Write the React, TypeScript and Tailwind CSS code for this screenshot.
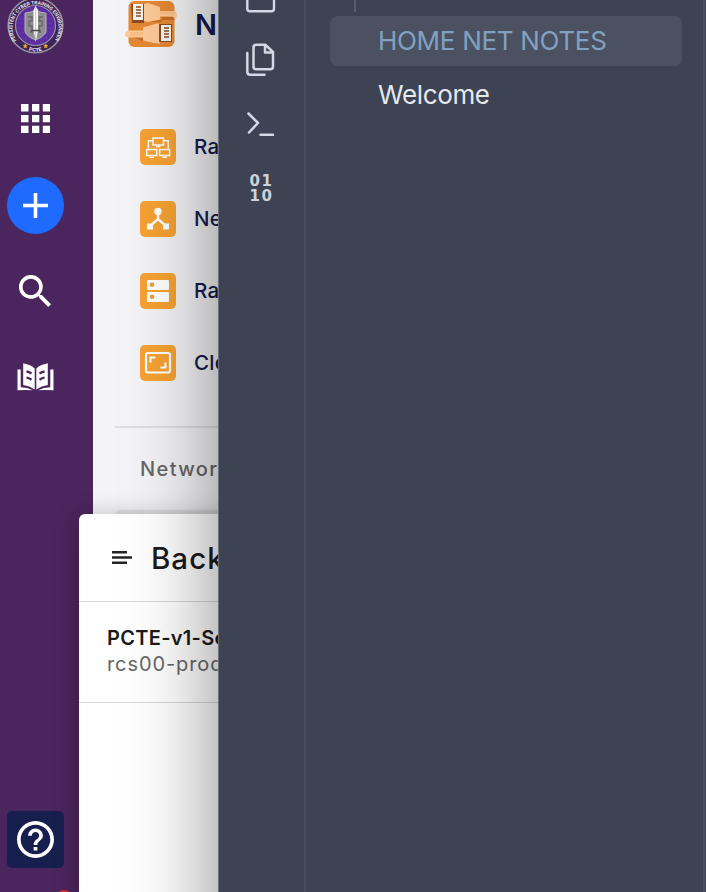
import React from "react";

function Seal() {
  return (
    <svg viewBox="0 0 57 57" className="size-[57px]" fontFamily="Liberation Sans, sans-serif">
      <defs>
        <path id="seal-top" d="M 9.5 43.5 A 23 23 0 1 1 47.5 43.5" />
        <path id="seal-bottom" d="M 16 51.2 A 25.8 25.8 0 0 0 41 51.2" />
      </defs>
      <circle cx="28.5" cy="28.5" r="27.3" fill="#402458" stroke="#9a95a3" strokeWidth="1.6" />
      <circle cx="28.5" cy="28.5" r="20" fill="#5b2da0" stroke="#9a95a3" strokeWidth="1.2" />
      <path d="M12 22h33M11 26h35M10 31h37M12 36h33M15 41h27M19 15v28M24 11v35M34 11v35M39 15v28" stroke="#7a50ba" strokeWidth=".5" strokeDasharray="2 1" />
      <path d="M18 16.200q6-.8 10.500-3 4.500 2.200 10.500 3v18.500q-2 5-10.500 8.300-8.500-3.300-10.500-8.300z" fill="#8e8e91" stroke="#b3b2b7" />
      <path d="M21 20h4v4h-3v5h3v6h-2M36 20h-4v4h3v5h-3v6h2" fill="none" stroke="#65656a" strokeWidth="1.300" />
      <path d="M28.500 9l2.600 4v20l-2.300 12-2.300-12V13z" fill="#fafafa" />
      <path d="M28.700 11v32" stroke="#aaa" strokeWidth=".7" />
      <path d="M24 33.500h9.500" stroke="#47474c" strokeWidth="1.500" />
      <text fill="#f0edf3" fontSize="5.200" fontWeight="700">
        <textPath href="#seal-top" textLength="101" lengthAdjust="spacingAndGlyphs">PERSISTENT CYBER TRAINING ENVIRONMENT</textPath>
      </text>
      <text fill="#f0edf3" fontSize="5" fontWeight="700">
        <textPath href="#seal-bottom" startOffset="50%" textAnchor="middle">PCTE</textPath>
      </text>
      <path d="M18.200 47l.7 1.300 1.400.2-1.100 1 .3 1.500-1.300-.7-1.300.7.3-1.500-1.100-1 1.400-.2zM38.800 47l.7 1.300 1.400.2-1.100 1 .3 1.500-1.300-.7-1.300.7.3-1.500-1.100-1 1.400-.2z" fill="#eab52c" stroke="#eab52c" strokeWidth=".4" />
    </svg>
  );
}

function Sidebar() {
  return (
    <nav className="relative flex h-full w-[93px] shrink-0 flex-col bg-[#4b255d] pl-[7px]">
      <div className="-mt-[3.500px] h-[57px]"><Seal /></div>
      <svg viewBox="0 0 29 29" className="mt-[50.500px] ml-[14px] size-[29px] fill-white">
        <path d="M0 0h7.500v7.500H0zM11 0h7.300v7.500H11zM21.800 0H29v7.500h-7.200zM0 11h7.500v7.300H0zM11 11h7.300v7.300H11zM21.800 11H29v7.300h-7.200zM0 21.800h7.500V29H0zM11 21.800h7.300V29H11zM21.800 21.800H29V29h-7.200z" />
      </svg>
      <div className="mt-[44px] flex size-[57px] items-center justify-center rounded-full bg-[#1f6bff]">
        <svg viewBox="0 0 25 25" className="size-[25px]"><path d="M12.500 0v25M0 12.500h25" stroke="white" strokeWidth="3.600" /></svg>
      </div>
      <svg viewBox="3 3 17.500 17.500" className="mt-[41px] ml-[12px] size-[32px] fill-white">
        <path d="M15.500 14h-.79l-.28-.27A6.471 6.471 0 0 0 16 9.500 6.500 6.500 0 1 0 9.500 16c1.610 0 3.090-.59 4.230-1.570l.27.28v.79l5 4.990L20.490 19l-4.990-5zm-6 0C7.010 14 5 11.990 5 9.500S7.010 5 9.500 5 14 7.010 14 9.500 11.990 14 9.500 14z" />
      </svg>
      <svg viewBox="0 0 37 28" className="mt-[56px] ml-[10px] h-[28px] w-[37px]">
        <g fill="white">
          <path d="M6.200.3Q14 1.800 17.700 5.500V26.500Q12.500 22.800 6.200 22zM30.800.3Q23 1.800 19.300 5.500V26.500Q24.500 22.800 30.800 22z" />
          <path d="M.5 6.500h3.200v17.700q7 .2 12 3Q7 27 .5 27.300zM36.500 6.500h-3.200v17.700q-7 .2-12 3Q30 27 36.500 27.300z" />
        </g>
        <path d="M9.500 8.500q2.500.3 5 2M9.500 14.700q2.500.3 5 2M27.500 8.500q-2.500.3-5 2M27.500 14.700q-2.500.3-5 2" fill="none" stroke="#4b255d" strokeWidth="2.300" />
      </svg>
      <div className="mt-[420px] flex size-[57px] shrink-0 items-center justify-center rounded-[5px] bg-[#171f4e]">
        <svg viewBox="2 2 20 20" className="size-[37px] fill-white">
          <path d="M11 18h2v-2h-2v2zm1-16C6.480 2 2 6.480 2 12s4.480 10 10 10 10-4.480 10-10S17.520 2 12 2zm0 18c-4.410 0-8-3.590-8-8s3.590-8 8-8 8 3.590 8 8-3.590 8-8 8zm0-14c-2.210 0-4 1.790-4 4h2c0-1.100.9-2 2-2s2 .9 2 2c0 2-3 1.750-3 5h2c0-2.250 3-2.500 3-5 0-2.210-1.790-4-4-4z" />
        </svg>
      </div>
      <span className="absolute top-[890px] left-[55px] size-[18px] rounded-full bg-[#d92a25]" />
    </nav>
  );
}

function CableLogo() {
  return (
    <svg viewBox="0 0 54 48" className="h-[48px] w-[54px] shrink-0">
      <rect x="3.500" y="1" width="46" height="46" rx="6" fill="#e68935" />
      <path d="M20 22h17v-5h12.500v3H36zM5 36h12l15 8v-3H18z" fill="#c46e29" />
      <path d="M19 4l4-1 12 4v4h14q3 .5 3 4t-3 3.500l-1-2H35v3L23 22l-4-1zM35 24l-3-.5-14 4v3H4q-4 1-4 4t4 3h14v3l13 3h4z" fill="#ffcb9a" />
      <path d="M35 11h14v4H35zM5 32h13v4H5z" fill="#fbc088" />
      <path d="M6 4h13v19H7zM34 24h13v18H34z" fill="#8c4c22" />
      <path d="M8 4h10v16H8zM36 25h10v16H36z" fill="#f7f5ef" />
      <path d="M11 7h5M11 10h5M11 13h5M11 16h5M39 28h5M39 31h5M39 34h5M39 37h5" stroke="#8c4c22" strokeWidth="1.500" />
    </svg>
  );
}

const tiles: { label: string; icon: React.ReactNode }[] = [
  {
    label: "Range Networks",
    icon: (
      <g fill="none" stroke="white" strokeWidth="1.500">
        <path d="M13 9h10.500v7H13zM6.700 20.500h10v6h-10zM19.600 20.500h10v6h-10zM13 11.700H8.400v7.500M23.500 11.700h4.700v7.500" />
        <path d="M16 17.500h4.500M9.500 28.200h4.500M22.500 28.200h4.500" strokeWidth="1.500" />
      </g>
    ),
  },
  {
    label: "Network Maps",
    icon: (
      <g fill="white">
        <circle cx="18" cy="10.500" r="3.700" />
        <path d="M7 22.500h6v6H7zM23 22.500h6v6h-6z" />
        <path d="M18 12v7M10 25l8-7 8 7" fill="none" stroke="white" strokeWidth="2.400" />
      </g>
    ),
  },
  {
    label: "Range Hosts",
    icon: (
      <g>
        <rect x="7" y="7" width="22" height="10" rx="1" fill="white" />
        <rect x="7" y="19" width="22" height="10" rx="1" fill="white" />
        <circle cx="12" cy="11.700" r="2.300" fill="#f29d31" />
        <circle cx="12" cy="23.700" r="2.300" fill="#f29d31" />
      </g>
    ),
  },
  {
    label: "Cloud Consoles",
    icon: (
      <g fill="none" stroke="white">
        <rect x="6" y="8" width="24" height="19.500" rx="2" strokeWidth="2.200" />
        <path d="M10.500 17.500v-5h5M25.500 17.500v5h-5" strokeWidth="2.200" />
      </g>
    ),
  },
];

function Content() {
  return (
    <main className="h-full w-[400px] shrink-0 overflow-hidden bg-[#f4f4f6] text-[#141b4d]">
      <header className="flex h-[48px] items-center pl-[32px]">
        <CableLogo />
        <h1 className="mt-[2px] ml-[16px] text-[29px] leading-[48px] font-semibold tracking-[1.500px] whitespace-nowrap">Networks</h1>
      </header>
      <ul className="mt-[81px] ml-[47px] flex flex-col gap-[36px]">
        {tiles.map((tile) => (
          <li key={tile.label} className="flex h-[36px] items-center gap-[18px]">
            <svg viewBox="0 0 36 36" className="size-[36px] shrink-0 rounded-[5px] bg-[#f7a233]">{tile.icon}</svg>
            <span className="text-[20.500px] leading-[36px] font-medium tracking-[0.300px] whitespace-nowrap">{tile.label}</span>
          </li>
        ))}
      </ul>
      <section className="mt-[45px] ml-[22px] border-t-2 border-[#dfdfe2]">
        <h2 className="mt-[25px] ml-[25px] text-[20px] leading-[32px] font-medium tracking-[1.400px] text-[#666668]">Networks</h2>
        <div className="mt-[25px] h-[60px] rounded-[5px] bg-[#e4e4e7]" />
      </section>
    </main>
  );
}

function BackgroundPanel() {
  return (
    <section className="absolute top-[514px] left-[79px] h-[420px] w-[420px] rounded-[6px] bg-white text-[#1b1b1d] shadow-[0_2px_24px_rgba(0,0,0,0.25)]">
      <header className="flex h-[88px] items-center border-b border-[#dadadc] pl-[33px]">
        <svg viewBox="0 0 20 13" className="h-[13px] w-[20px]">
          <path d="M0 1.200h15M0 6.500h20M0 11.800h15" stroke="#242426" strokeWidth="2.400" />
        </svg>
        <h2 className="ml-[19px] text-[29.500px] leading-[40px] font-medium tracking-[1px] whitespace-nowrap">Background Tasks</h2>
      </header>
      <div className="h-[101px] border-b border-[#dadadc] pt-[23px] pl-[28px] whitespace-nowrap">
        <p className="text-[20px] leading-[26px] font-semibold tracking-[0.300px]">PCTE-v1-Server</p>
        <p className="text-[20px] leading-[26px] tracking-[0.900px] text-[#666668]">rcs00-production</p>
      </div>
    </section>
  );
}

function NotesWindow() {
  return (
    <section className="absolute -top-[200px] left-[218px] flex h-[1300px] w-[600px] border-l border-[#6b717c] bg-[#3d4352] pt-[200px] shadow-[0_0_84px_rgba(0,0,0,0.46)]">
      <aside className="flex w-[87px] shrink-0 flex-col border-r-2 border-[#454d5c]">
        <svg viewBox="0 0 32 14" className="ml-[26px] h-[14px] w-[32px]">
          <path d="M2.300-5V8.500q0 2.800 2.500 2.800H26.500q2.500 0 2.500-2.800V-5" fill="none" stroke="#d3d9e4" strokeWidth="2.400" />
        </svg>
        <svg viewBox="0 0 32 36" className="mt-[28px] ml-[26px] h-[36px] w-[32px]" fill="none" stroke="#d3d9e4" strokeWidth="2.500" strokeLinecap="round" strokeLinejoin="round">
          <path d="M11.500 2.800H20.500L28 10v14.500q0 2.800-2.800 2.800H11.300Q8.500 27.300 8.500 24.500V5.500q0-2.700 3-2.700zM20 3v7.500H28M2.300 11v18.500q0 3.300 3 3.300H19.500" />
        </svg>
        <svg viewBox="0 0 32 28" className="mt-[32px] ml-[26px] h-[28px] w-[32px]" fill="none" stroke="#d3d9e4" strokeWidth="2.500" strokeLinecap="round" strokeLinejoin="round">
          <path d="M3.500 3.500l9.500 9.500-9 9.500M15.500 24.700H28" />
        </svg>
        <div className="mt-[36px] ml-[30.500px] font-['DejaVu_Sans',sans-serif] text-[15px] leading-[15px] font-bold tracking-[1.500px] text-[#ccd2dd]">
          <p>01</p>
          <p>10</p>
        </div>
      </aside>
      <div className="w-[399px] shrink-0 border-r-2 border-[#48515f] pl-[24px]">
        <div className="ml-[24px] h-[12px] w-[2px] bg-[#555c6a]" />
        <div className="mt-[4px] h-[50px] w-[352px] rounded-[8px] bg-[#4b5160] pl-[48px] text-[26px] leading-[50px] tracking-[-0.300px] text-[#81a1c1]">HOME NET NOTES</div>
        <div className="mt-[4px] h-[50px] w-[352px] pl-[48px] text-[26px] leading-[50px] tracking-[-0.350px] text-[#e5e9f0]">Welcome</div>
      </div>
    </section>
  );
}

export default function App() {
  return (
    <div className="relative h-[892px] w-[706px] overflow-hidden font-['Inter',sans-serif]">
      <div className="flex h-full">
        <Sidebar />
        <Content />
      </div>
      <BackgroundPanel />
      <NotesWindow />
    </div>
  );
}
